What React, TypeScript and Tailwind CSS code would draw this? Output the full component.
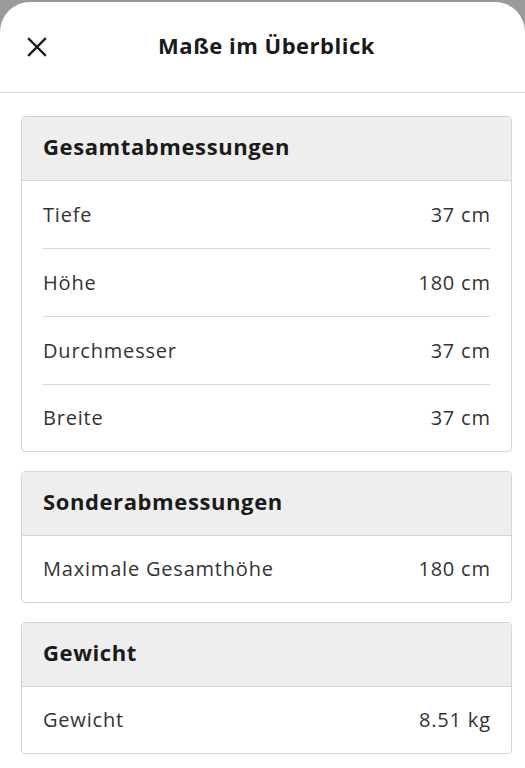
import React from "react";

const sections = [
  {
    title: "Gesamtabmessungen",
    rows: [
      ["Tiefe", "37 cm"],
      ["Höhe", "180 cm"],
      ["Durchmesser", "37 cm"],
      ["Breite", "37 cm"],
    ],
  },
  { title: "Sonderabmessungen", rows: [["Maximale Gesamthöhe", "180 cm"]] },
  { title: "Gewicht", rows: [["Gewicht", "8.51 kg"]] },
];

export default function App() {
  return (
    <div className="w-[525px] h-[768px] bg-[#9a9a9a] pt-[2px] overflow-hidden" style={{ fontFamily: "'Open Sans', sans-serif" }}>
      <div className="h-full bg-white rounded-t-[30px] overflow-hidden">
        <div className="relative h-[91px] flex items-center justify-center border-b border-[#dcdcdc] pl-[8px]">
          <svg className="absolute left-[27px] top-[35px]" width="20" height="20" viewBox="0 0 20 20" fill="none" stroke="#1a1a1a" strokeWidth="2.4" strokeLinecap="square">
            <path d="M2 2 L18 18 M18 2 L2 18" />
          </svg>
          <span className="text-[22px] font-bold text-[#1a1a1a] tracking-[0.5px] pb-[3px]">Maße im Überblick</span>
        </div>
        <div className="flex flex-col gap-[19px] pl-[21px] pr-[13px] pt-[23px]">
          {sections.map((s) => (
            <div key={s.title} className="border border-[#d6d6d6] rounded-[4px] overflow-hidden">
              <div className="h-[64px] bg-[#eeeeee] border-b border-[#d6d6d6] flex items-center px-[21px] pb-[4px]">
                <span className="text-[22px] font-bold text-[#1a1a1a] tracking-[0.6px]">{s.title}</span>
              </div>
              <div className="px-[21px]">
                {s.rows.map(([k, v], i) => (
                  <div key={k} className={`flex items-center justify-between text-[20px] text-[#333333] tracking-[0.8px] ${i < s.rows.length - 1 ? "h-[68px] border-b border-[#d9d9d9]" : "h-[66px]"}`}>
                    <span>{k}</span>
                    <span className="mr-[-0.8px]">{v}</span>
                  </div>
                ))}
              </div>
            </div>
          ))}
        </div>
      </div>
    </div>
  );
}
